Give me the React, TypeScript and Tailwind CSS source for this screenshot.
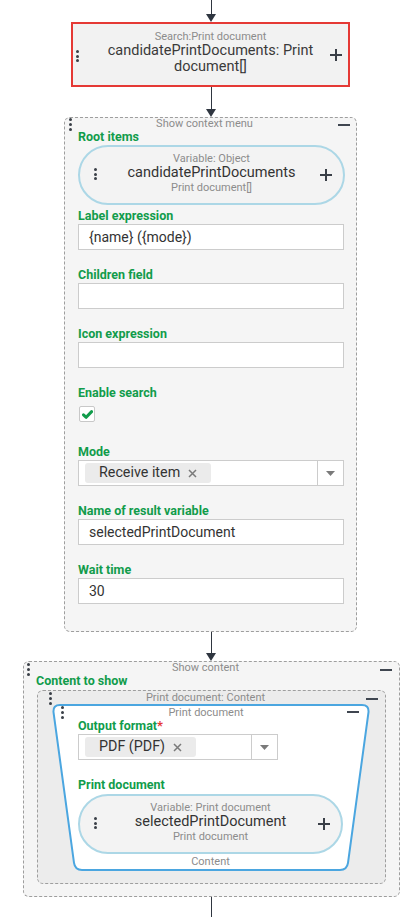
import React from "react";

const Dots = ({ gap = "gap-[2px]" }: { gap?: string }) => (
  <div className={`flex flex-col ${gap}`}>
    <span className="block w-[3px] h-[3px] rounded-full bg-[#3a3f47]" />
    <span className="block w-[3px] h-[3px] rounded-full bg-[#3a3f47]" />
    <span className="block w-[3px] h-[3px] rounded-full bg-[#3a3f47]" />
  </div>
);

const Plus = () => (
  <svg width="14" height="14" viewBox="0 0 14 14">
    <path d="M7 1v12M1 7h12" stroke="#3a3f47" strokeWidth="2" />
  </svg>
);

const Minus = () => <div className="w-[12px] h-[2px] bg-[#3f4650]" />;

const Connector = ({ h, head = true }: { h: string; head?: boolean }) => (
  <div className={`ml-[206px] w-[10px] ${h} flex flex-col items-center`}>
    <div className="w-px flex-1 bg-[#2f3640]" />
    {head && (
      <svg width="10" height="8" viewBox="0 0 10 8" className="block">
        <path d="M0 0h10L5 8z" fill="#2f3640" />
      </svg>
    )}
  </div>
);

const Label = ({ children, req = false }: { children: React.ReactNode; req?: boolean }) => (
  <div className="text-[12.5px] leading-[14px] font-bold text-[#119c4b]">
    {children}
    {req && <span className="text-[#e53935] text-[13px]">*</span>}
  </div>
);

const Input = ({ value = "" }: { value?: string }) => (
  <div className="mt-[1px] h-[26px] border border-[#cccccc] bg-white pl-[10px] flex items-center text-[14px] text-[#333]">
    {value}
  </div>
);

const XIcon = () => (
  <svg width="9" height="9" viewBox="0 0 9 9">
    <path d="M1 1l7 7M8 1L1 8" stroke="#7a7a7a" strokeWidth="1.5" />
  </svg>
);

const Select = ({ value, width }: { value: string; width: string }) => (
  <div className={`mt-[1px] h-[26px] ${width} border border-[#cccccc] bg-white flex items-center`}>
    <div className="flex-1 pl-[6px] flex items-center">
      <div className="h-[20px] bg-[#ebebeb] rounded-[3px] pl-[14px] pr-[14px] flex items-center gap-[8px] text-[14.3px] text-[#333]">
        <span>{value}</span>
        <XIcon />
      </div>
    </div>
    <div className="w-[26px] h-full border-l border-[#cccccc] flex items-center justify-center">
      <svg width="9" height="5" viewBox="0 0 9 5">
        <path d="M0 0h9L4.5 5z" fill="#7a7a7a" />
      </svg>
    </div>
  </div>
);

const Pill = ({ top, main, bottom }: { top: string; main: string; bottom: string }) => (
  <div className="relative h-[60px] rounded-full border-2 border-[#acd7e6] bg-[#f3f3f3] pt-[5px] flex flex-col items-center">
    <div className="text-[11px] leading-[13px] text-[#8c8c8c]">{top}</div>
    <div className="text-[14.5px] leading-[16px] text-[#333]">{main}</div>
    <div className="text-[11px] leading-[13px] text-[#8c8c8c]">{bottom}</div>
    <div className="absolute left-[14px] top-[21px]">
      <Dots gap="gap-[1.5px]" />
    </div>
    <div className="absolute right-[10px] top-[21px]">
      <Plus />
    </div>
  </div>
);

const Title = ({ children, lh = "leading-[12px]" }: { children: React.ReactNode; lh?: string }) => (
  <div className={`text-[11px] ${lh} text-[#8c8c8c] text-center pr-[12px]`}>{children}</div>
);

export default function App() {
  return (
    <div className="w-[420px] min-h-[917px] bg-white font-['Roboto',sans-serif] text-[#333]">
      <Connector h="h-[22px]" />

      {/* Search node */}
      <div className="relative ml-[71px] w-[279px] h-[65px] border-2 border-[#e53935] bg-[#f2f2f2] pt-[6px] flex flex-col items-center">
        <div className="text-[11px] leading-[13px] text-[#8c8c8c]">Search:Print document</div>
        <div className="text-[14.5px] leading-[16px] text-[#3a3a3a] text-center px-[28px]">
          candidatePrintDocuments: Print document[]
        </div>
        <div className="absolute left-[3px] top-[26px]">
          <Dots gap="gap-[1.5px]" />
        </div>
        <div className="absolute right-[5px] top-[24px]">
          <Plus />
        </div>
      </div>

      <Connector h="h-[30px]" />

      {/* Show context menu block */}
      <div className="relative ml-[64px] w-[293px] border border-dashed border-[#9e9e9e] rounded-[6px] bg-[#f5f5f5] pl-[13px] pr-[12px] pb-[27px]">
        <div className="absolute left-[4px] top-0">
          <Dots />
        </div>
        <div className="absolute right-[6px] top-[6px]">
          <Minus />
        </div>
        <div className="-ml-[13px] -mr-[12px]">
          <Title>Show context menu</Title>
        </div>
        <Label>Root items</Label>
        <div className="mt-[1px] mb-[4px] -mr-[1px]">
          <Pill top="Variable: Object" main="candidatePrintDocuments" bottom="Print document[]" />
        </div>

        <div className="mb-[18px]">
          <Label>Label expression</Label>
          <Input value="{name} ({mode})" />
        </div>
        <div className="mb-[18px]">
          <Label>Children field</Label>
          <Input />
        </div>
        <div className="mb-[18px]">
          <Label>Icon expression</Label>
          <Input />
        </div>
        <div className="mb-[23px]">
          <Label>Enable search</Label>
          <div className="mt-[6px] ml-[1px] w-[16px] h-[16px] border border-[#c8c8c8] rounded-[2px] bg-white flex items-center justify-center">
            <svg width="11" height="9" viewBox="0 0 11 9">
              <path d="M1.5 4.8L4.2 7.3L9.6 1.6" stroke="#119c4b" strokeWidth="3" fill="none" strokeLinecap="round" strokeLinejoin="round" />
            </svg>
          </div>
        </div>
        <div className="mb-[18px]">
          <Label>Mode</Label>
          <Select value="Receive item" width="w-full" />
        </div>
        <div className="mb-[18px]">
          <Label>Name of result variable</Label>
          <Input value="selectedPrintDocument" />
        </div>
        <div>
          <Label>Wait time</Label>
          <Input value="30" />
        </div>
      </div>

      <Connector h="h-[29px]" />

      {/* Show content block */}
      <div className="relative ml-[23px] w-[377px] border border-dashed border-[#9e9e9e] rounded-[6px] bg-[#f5f5f5] px-[13px] pb-[12px]">
        <div className="absolute left-[3px] top-[1px]">
          <Dots />
        </div>
        <div className="absolute right-[7px] top-[7px]">
          <Minus />
        </div>
        <div className="-mx-[13px]">
          <Title>Show content</Title>
        </div>
        <div className="-ml-[1px]">
          <Label>Content to show</Label>
        </div>

        {/* Print document: Content */}
        <div className="relative mt-[2px] border border-dashed border-[#9e9e9e] rounded-[6px] bg-[#ececec] pl-[14px] pb-[12px]">
          <div className="absolute left-[11px] top-[1px]">
            <Dots />
          </div>
          <div className="absolute right-[7px] top-[7px]">
            <Minus />
          </div>
          <div className="-ml-[14px]">
            <Title lh="leading-[13px]">Print document: Content</Title>
          </div>

          {/* Trapezoid Print document */}
          <div className="relative w-[318px]">
            <svg className="absolute inset-0 w-full h-full" viewBox="0 0 318 166" preserveAspectRatio="none">
              <path
                d="M8 1L310 1Q317 1 316.5 8L296 158Q295 165 288 165L30 165Q23 165 22 158L1.5 8Q1 1 8 1Z"
                fill="#ffffff"
                stroke="#4ba6e0"
                strokeWidth="2"
                vectorEffect="non-scaling-stroke"
              />
            </svg>
            <div className="absolute left-[9px] top-[2px]">
              <Dots />
            </div>
            <div className="absolute right-[11px] top-[7px]">
              <Minus />
            </div>
            <div className="relative pt-[2px] pb-[3px] pl-[26px] pr-[27px]">
              <div className="-ml-[26px] -mr-[27px] text-[11px] leading-[13px] text-[#8c8c8c] text-center pr-[10px]">
                Print document
              </div>
              <Label req>Output format</Label>
              <Select value="PDF (PDF)" width="w-[200px]" />
              <div className="mt-[18px]">
                <Label>Print document</Label>
              </div>
              <div className="mt-[2px]">
                <Pill top="Variable: Print document" main="selectedPrintDocument" bottom="Print document" />
              </div>
              <div className="mt-[1px] text-[11px] leading-[13px] text-[#8c8c8c] text-center">Content</div>
            </div>
          </div>
        </div>
      </div>

      <Connector h="h-[22px]" head={false} />
    </div>
  );
}
